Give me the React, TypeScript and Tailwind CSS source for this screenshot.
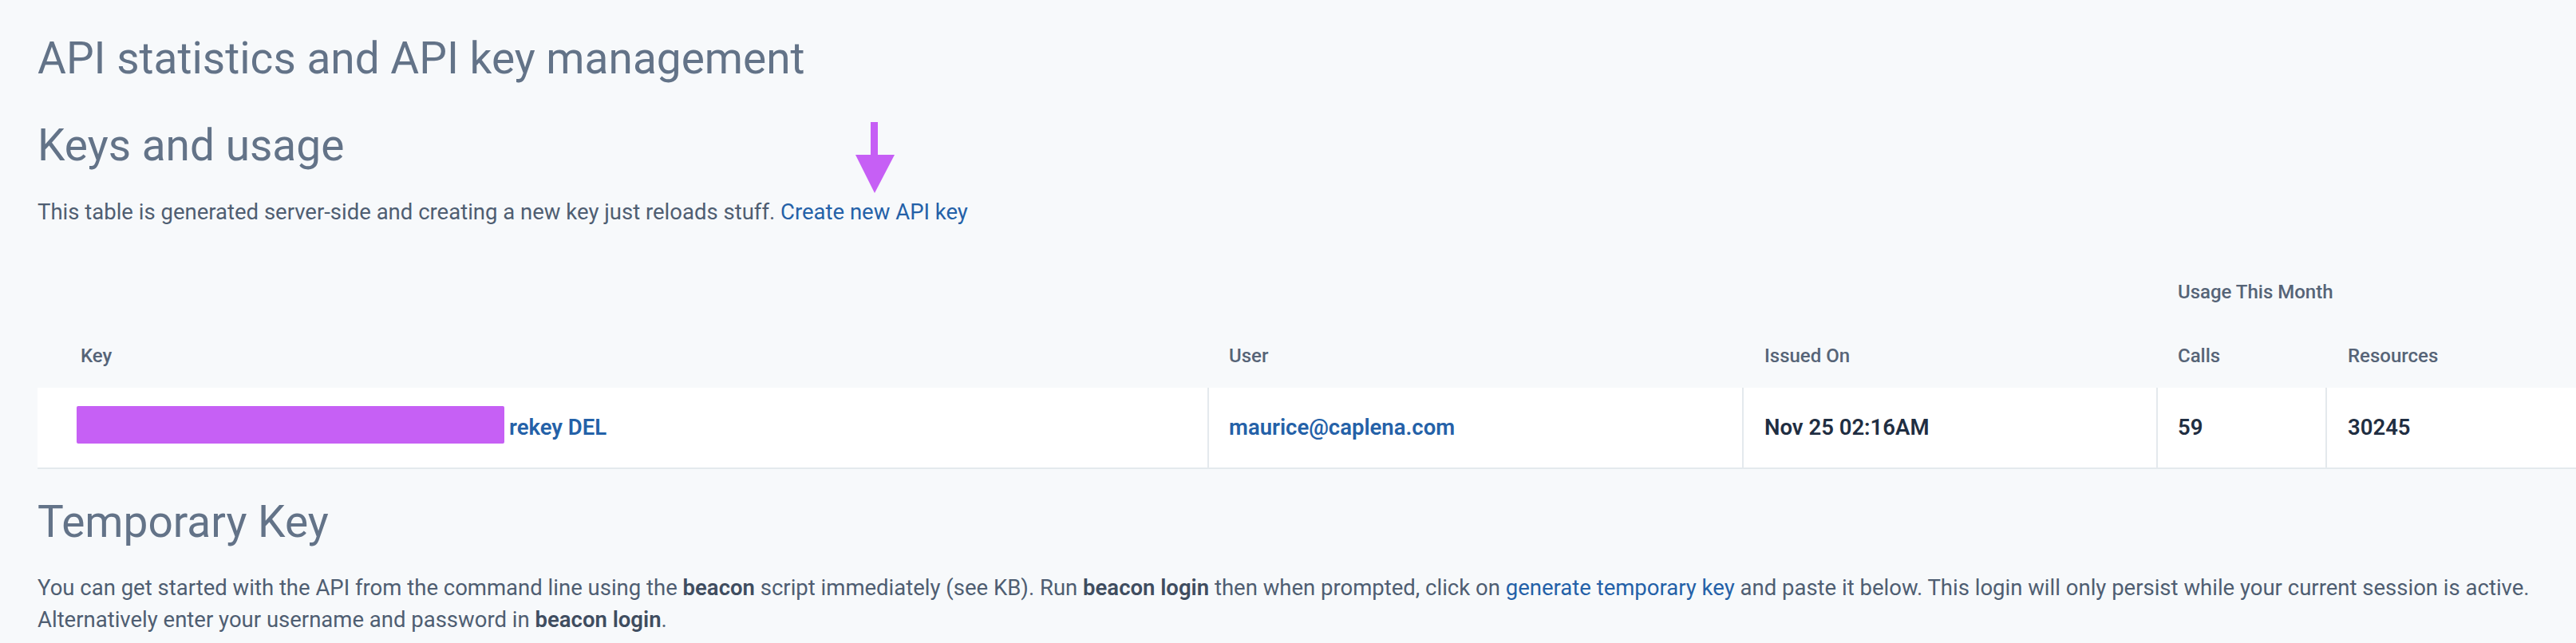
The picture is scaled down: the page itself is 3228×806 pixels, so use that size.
import React from "react";

export default function App() {
  return (
    <div
      className="relative min-h-[806px] w-full bg-[#f7f9fb] pl-[47px] pt-[40px] text-[#546275]"
      style={{ fontFamily: 'Roboto, "Noto Sans", sans-serif' }}
    >
      <h1 className="text-[55px] leading-[67px] font-normal text-[#637388]">
        API statistics and API key management
      </h1>
      <h2 className="mt-[42px] text-[55px] leading-[67px] font-normal text-[#637388]">
        Keys and usage
      </h2>
      <p className="mt-[30px] text-[27.5px] leading-[40px] text-[#4f5e72]">
        This table is generated server-side and creating a new key just reloads stuff.{" "}
        <a className="text-[#2461a8]">Create new API key</a>
      </p>

      {/* annotation arrow */}
      <svg
        className="pointer-events-none absolute left-[1072px] top-[153px]"
        width="49"
        height="90"
        viewBox="0 0 49 90"
      >
        <rect x="19" y="0" width="9" height="42" fill="#c65ff5" />
        <polygon points="0,41 49,41 24,89" fill="#c65ff5" />
      </svg>

      {/* table */}
      <div className="mt-[40px] grid grid-cols-[1466px_670px_519px_212px_1fr] text-[24px] leading-[32px] font-medium text-[#566477]">
        {/* header row 1 */}
        <div className="h-[80px]" />
        <div className="h-[80px]" />
        <div className="h-[80px]" />
        <div className="col-span-2 py-[24px] pl-[27px]">Usage This Month</div>
        {/* header row 2 */}
        <div className="py-[24px] pl-[54px]">Key</div>
        <div className="py-[24px] pl-[27px]">User</div>
        <div className="py-[24px] pl-[28px]">Issued On</div>
        <div className="py-[24px] pl-[27px]">Calls</div>
        <div className="py-[24px] pl-[28px]">Resources</div>
        {/* body row */}
        <div className="flex items-center border-b-2 border-[#e4e9ed] bg-white py-[30px] pl-[49px] text-[27.5px] leading-[40px] font-semibold">
          <span className="mt-[-8px] inline-block h-[47px] w-[536px] rounded-[2px] bg-[#c660f5]" />
          <a className="ml-[6px] text-[#2461a8]">rekey DEL</a>
        </div>
        <div className="border-b-2 border-l-2 border-[#e4e9ed] bg-white py-[30px] pl-[25px] text-[27.5px] leading-[40px] font-semibold text-[#2461a8]">
          maurice@caplena.com
        </div>
        <div className="border-b-2 border-l-2 border-[#e4e9ed] bg-white py-[30px] pl-[26px] text-[27.5px] leading-[40px] font-semibold text-[#1f2e42]">
          Nov 25 02:16AM
        </div>
        <div className="border-b-2 border-l-2 border-[#e4e9ed] bg-white py-[30px] pl-[25px] text-[27.5px] leading-[40px] font-semibold text-[#1f2e42]">
          59
        </div>
        <div className="border-b-2 border-l-2 border-[#e4e9ed] bg-white py-[30px] pl-[26px] text-[27.5px] leading-[40px] font-semibold text-[#1f2e42]">
          30245
        </div>
      </div>

      <h2 className="mt-[33px] text-[55px] leading-[67px] font-normal text-[#637388]">
        Temporary Key
      </h2>
      <p className="mt-[29px] pr-[40px] text-[27.5px] leading-[40px] text-[#4f5e72]">
        You can get started with the API from the command line using the{" "}
        <b className="font-semibold text-[#3f4d60]">beacon</b> script immediately (see KB). Run{" "}
        <b className="font-semibold text-[#3f4d60]">beacon login</b> then when prompted, click on{" "}
        <a className="text-[#2461a8]">generate temporary key</a> and paste it below. This login will
        only persist while your current session is active. Alternatively enter your username and
        password in <b className="font-semibold text-[#3f4d60]">beacon login</b>.
      </p>
    </div>
  );
}
